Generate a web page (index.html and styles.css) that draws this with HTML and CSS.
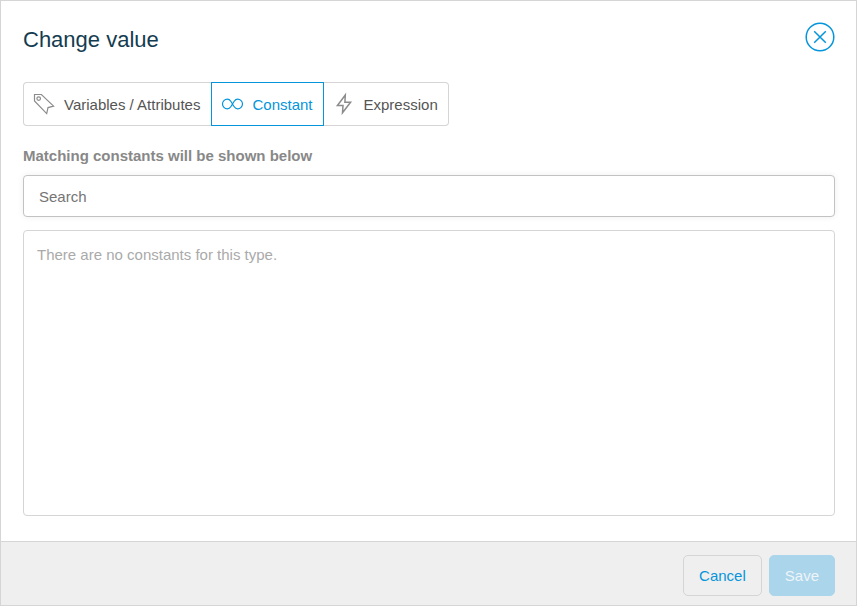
FILE: index.html
```html
<!DOCTYPE html>
<html lang="en">
<head>
<meta charset="utf-8">
<meta name="viewport" content="width=device-width, initial-scale=1">
<title>Change value</title>
<link rel="stylesheet" href="styles.css">
</head>
<body>
<main class="dialog" role="dialog" aria-labelledby="dialog-title">
  <header class="dialog-header">
    <h1 class="dialog-title" id="dialog-title">Change value</h1>
    <button class="close" type="button" aria-label="Close">
      <svg width="30" height="30" viewBox="0 0 30 30" fill="none" stroke="currentColor" stroke-width="1.5">
        <circle cx="15" cy="15" r="13.8"/>
        <path d="M9.2 9.2l11.6 11.6M20.8 9.2L9.2 20.8"/>
      </svg>
    </button>
  </header>

  <section class="dialog-body">
    <div class="tabs" role="tablist">
      <button class="tab" type="button" role="tab" aria-selected="false">
        <svg class="tab-icon" viewBox="0 1 20 20">
          <path d="M.5 .5H7.4L19.6 12.1L14 13.6L12.7 19.6L.5 6.9Z"/>
          <circle cx="4.7" cy="4.6" r="1.8"/>
        </svg>
        Variables / Attributes
      </button>
      <button class="tab tab-active" type="button" role="tab" aria-selected="true">
        <svg class="tab-icon" viewBox="0 1 20 20">
          <path d="M10.5 10L8.8 7.300C7.900 5.900 6.800 5.200 5.300 5.200A4.800 4.800 0 0 0 5.300 14.800C6.800 14.800 7.900 14.100 8.800 12.700L12.200 7.300C13.100 5.900 14.200 5.200 15.700 5.200A4.800 4.800 0 0 1 15.700 14.800C14.200 14.800 13.100 14.100 12.200 12.700Z"/>
        </svg>
        Constant
      </button>
      <button class="tab" type="button" role="tab" aria-selected="false">
        <svg class="tab-icon tab-icon-bold" viewBox="0 1 20 20">
          <path d="M11.300 1L3.400 11.500H9L8.500 18.800L16.600 8.200H10.900Z"/>
        </svg>
        Expression
      </button>
    </div>

    <label class="search-label" for="search">Matching constants will be shown below</label>
    <input class="search" id="search" type="text" placeholder="Search">
    <div class="results">There are no constants for this type.</div>
  </section>

  <footer class="dialog-footer">
    <button class="button" type="button">Cancel</button>
    <button class="button button-primary" type="button" disabled>Save</button>
  </footer>
</main>
</body>
</html>
```

FILE: styles.css
```css
*,
*::before,
*::after {
  box-sizing: border-box;
}

body {
  margin: 0;
  background: #fff;
  color: #555;
  font: 15px/20px "Liberation Sans", Arial, sans-serif;
}

button,
input {
  margin: 0;
  font: inherit;
}

svg {
  display: block;
  overflow: visible;
}

.dialog {
  display: flex;
  flex-direction: column;
  min-height: 100vh;
  border: 1px solid #d5d5d5;
}

.dialog-header {
  display: flex;
  align-items: flex-start;
  justify-content: space-between;
  padding: 21px 21px 0 22px;
}

.dialog-title {
  margin: 0;
  color: #143c50;
  font-size: 22px;
  font-weight: 400;
  line-height: 36px;
}

.close {
  padding: 0;
  border: 0;
  background: none;
  color: #0595db;
}

.dialog-body {
  flex: 1;
  display: flex;
  flex-direction: column;
  padding: 24px 21px 25px 22px;
}

.tabs {
  display: flex;
}

.tab {
  display: flex;
  align-items: center;
  gap: 10px;
  height: 44px;
  padding: 2px 10px 0;
  border: 1px solid #d5d5d5;
  border-width: 1px 0;
  background: #fff;
  color: #555;
}

.tab:first-child {
  padding-right: 11px;
  border-left-width: 1px;
  border-radius: 4px 0 0 4px;
}

.tab:last-child {
  border-right-width: 1px;
  border-radius: 0 4px 4px 0;
}

.tab-active {
  border-color: #0595db;
  border-width: 1px;
  color: #0595db;
}

.tab-icon {
  width: 20px;
  height: 20px;
  fill: none;
  stroke: #8c8c8c;
  stroke-width: 1.2;
}

.tab-icon-bold {
  stroke-width: 1.5;
}

.tab-active .tab-icon {
  stroke: #0595db;
}

.search-label {
  margin: 20px 0 9px;
  color: #888;
  font-weight: 700;
}

.search {
  width: 100%;
  height: 42px;
  padding: 0 15px;
  border: 1px solid #c2c2c2;
  border-radius: 4px;
  background: #fff;
  box-shadow: 0 0 6px rgba(0, 0, 0, 0.07);
  color: #555;
}

.search::placeholder {
  color: #757575;
  opacity: 1;
}

.results {
  flex: 1;
  margin-top: 13px;
  padding: 14px 13px;
  border: 1px solid #d5d5d5;
  border-radius: 4px;
  color: #aaa;
}

.dialog-footer {
  display: flex;
  justify-content: flex-end;
  gap: 7px;
  padding: 13px 21px 9px;
  border-top: 1px solid #d5d5d5;
  background: #efefef;
}

.button {
  height: 41px;
  padding: 0 15px;
  border: 1px solid #d5d5d5;
  border-radius: 5px;
  background: transparent;
  color: #0595db;
}

.button-primary {
  border-color: #abd5eb;
  background: #abd5eb;
  color: #eef4f8;
}
```
